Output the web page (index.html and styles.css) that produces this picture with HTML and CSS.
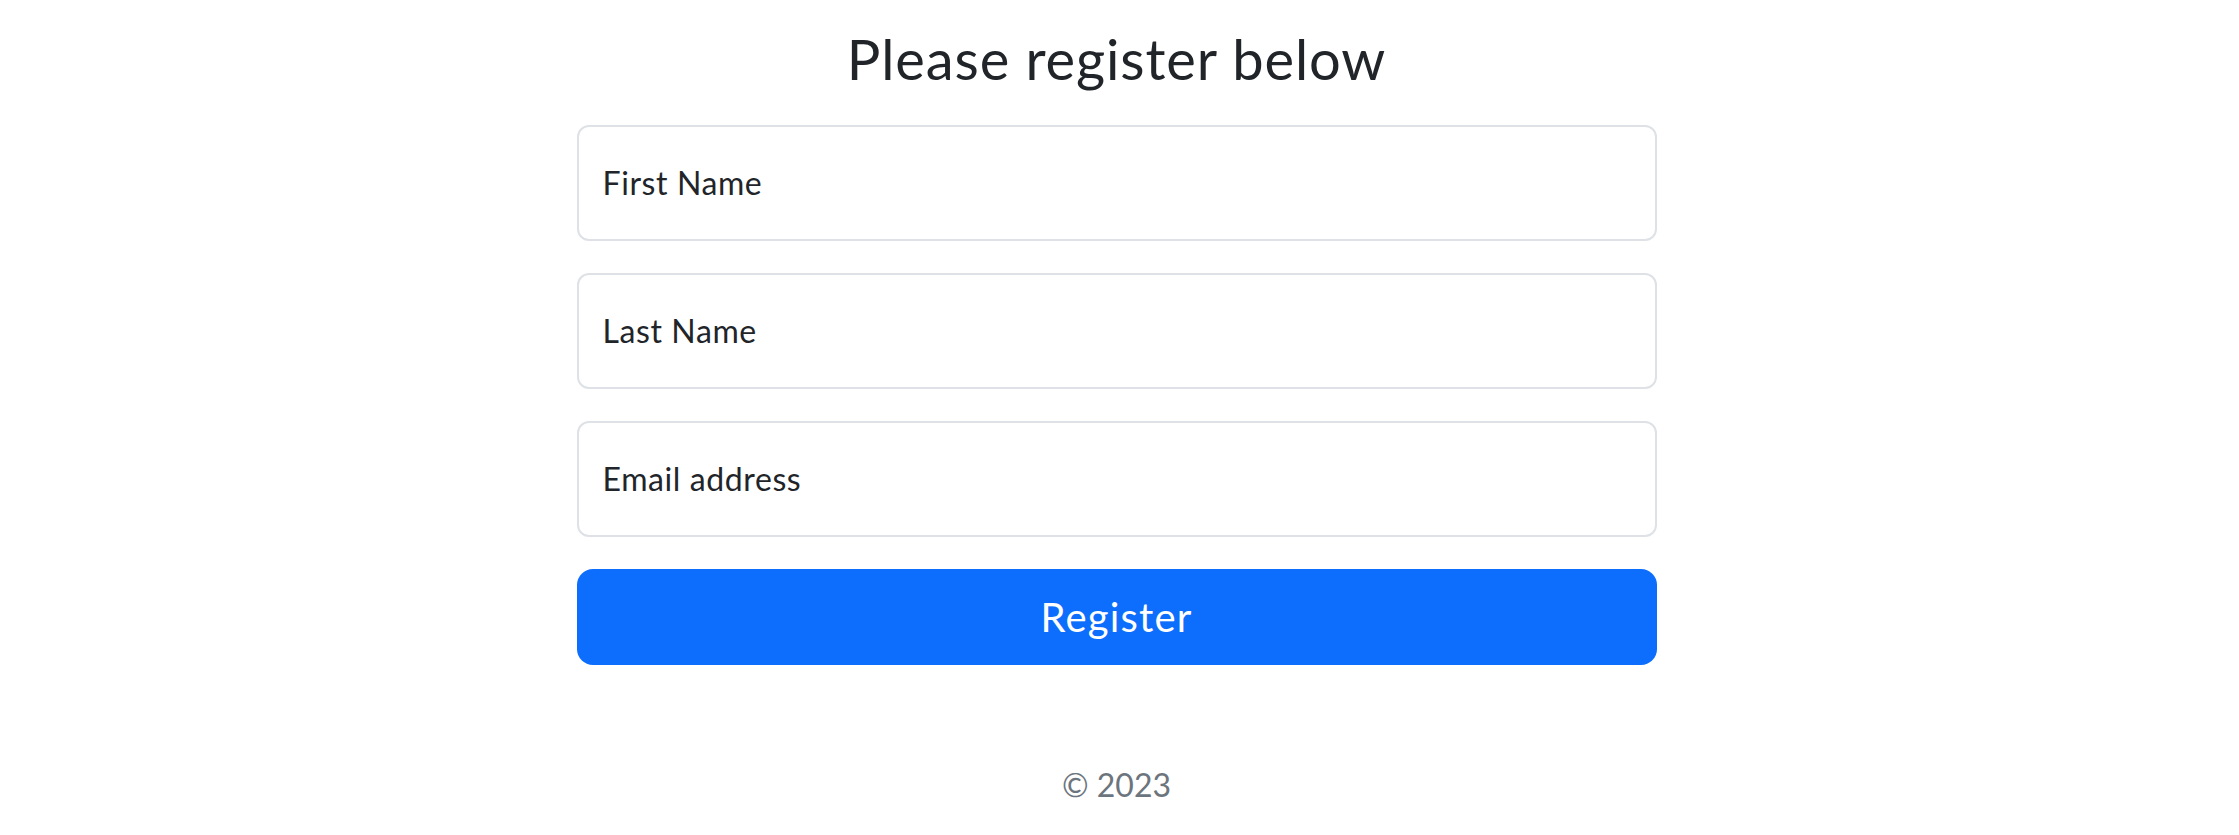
FILE: index.html
```html
<!DOCTYPE html>
<html lang="en">
<head>
<meta charset="utf-8">
<title>Register</title>
<link rel="stylesheet" href="styles.css">
</head>
<body>
<main class="form-signin">
  <form class="form">
    <h1 class="title">Please register below</h1>
    <div class="field"><span class="field-label">First Name</span></div>
    <div class="field"><span class="field-label">Last Name</span></div>
    <div class="field"><span class="field-label">Email address</span></div>
    <button type="button" class="btn-primary">Register</button>
    <p class="copyright">© 2023</p>
  </form>
</main>
</body>
</html>
```

FILE: styles.css
```css
html, body {
  margin: 0;
  padding: 0;
  background: #ffffff;
}
body {
  font-family: Lato, "Noto Sans", "Open Sans", sans-serif;
  color: #212529;
  padding-right: 6px;
}
.form-signin {
  width: 1080px;
  margin: 0 auto;
  padding-top: 25px;
}
.form {
  display: flex;
  flex-direction: column;
}
.title {
  margin: 0 0 33px 0;
  font-size: 56px;
  line-height: 67px;
  font-weight: 400;
  letter-spacing: 0.9px;
  text-align: center;
  color: #212529;
}
.field {
  box-sizing: border-box;
  height: 116px;
  border: 2px solid #dee2e6;
  border-radius: 12px;
  display: flex;
  align-items: center;
  padding: 0 24px;
  margin-bottom: 32px;
  background: #fff;
}
.field-label {
  font-size: 32px;
  line-height: 48px;
  letter-spacing: 0.6px;
  color: #212529;
}
.btn-primary {
  margin-top: 0;
  height: 96px;
  border: none;
  border-radius: 16px;
  background: #0d6efd;
  color: #ffffff;
  font-family: inherit;
  font-size: 40px;
  line-height: 60px;
  letter-spacing: 1.2px;
  cursor: pointer;
}
.copyright {
  margin: 96px 0 0 0;
  font-size: 32px;
  line-height: 48px;
  text-align: center;
  color: #6c757d;
}
```
